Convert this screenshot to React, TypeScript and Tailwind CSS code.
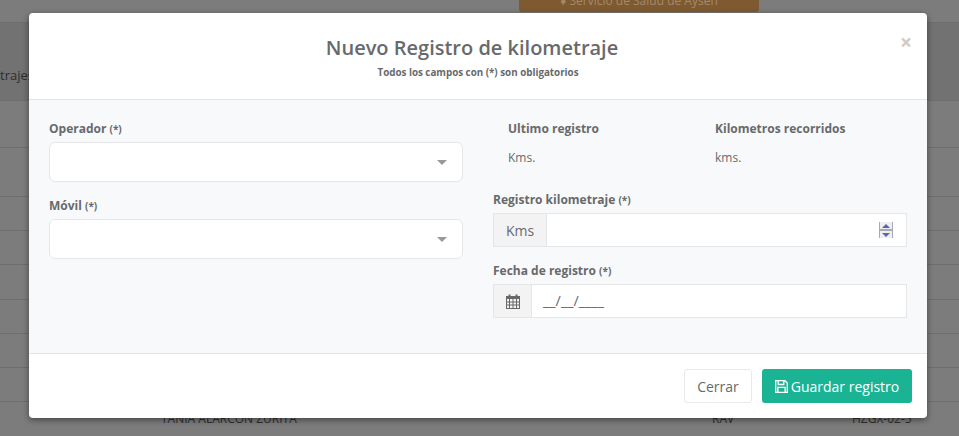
const font = { fontFamily: '"Open Sans", sans-serif' }

const Req = () => <small className="text-[10px] font-bold">(*)</small>

const Select = () => (
  <div className="flex h-[40px] items-center justify-end rounded-[6px] border border-[#e5e6e7] bg-white pr-[15px]">
    <div className="h-0 w-0 border-x-[5px] border-t-[5px] border-x-transparent border-t-[#999]" />
  </div>
)

const Spinner = () => (
  <div className="flex h-[16px] w-[14px] flex-col justify-between border-x border-[#a9a9b4] bg-[#a9a9b4]">
    <div className="flex h-[7px] items-center justify-center bg-[#efeff1]">
      <div className="h-0 w-0 border-x-[4px] border-b-[4px] border-x-transparent border-b-[#5566b5]" />
    </div>
    <div className="flex h-[7px] items-center justify-center bg-[#efeff1]">
      <div className="h-0 w-0 border-x-[4px] border-t-[4px] border-x-transparent border-t-[#5566b5]" />
    </div>
  </div>
)

const CalendarIcon = () => (
  <svg width="14" height="15" viewBox="0 0 14 15" className="text-[#676a6c]">
    <rect x="0.5" y="2.5" width="13" height="12" fill="none" stroke="currentColor" />
    <rect x="0.5" y="2.5" width="13" height="2.5" fill="currentColor" />
    <path d="M0 8h14M0 11h14M3.5 5v9M7 5v9M10.5 5v9" stroke="currentColor" strokeWidth="1" fill="none" />
    <rect x="2.5" y="0.5" width="2" height="3.5" fill="currentColor" />
    <rect x="9.5" y="0.5" width="2" height="3.5" fill="currentColor" />
  </svg>
)

const SaveIcon = () => (
  <svg width="13" height="13" viewBox="0 0 13 13" fill="none" stroke="currentColor" strokeWidth="1.3">
    <path d="M0.7 0.7h9.2l2.4 2.4v9.2H0.7z" />
    <path d="M3.2 0.7v3.8h5.6V0.7" />
    <path d="M2.9 12.3V7.4h7.2v4.9" />
  </svg>
)

const rows = [
  { h: 78, bg: 'bg-[#727272]' },
  { h: 47, bg: '' },
  { h: 49, bg: '' },
  { h: 34, bg: '' },
  { h: 34, bg: '' },
  { h: 35, bg: '' },
  { h: 34, bg: '' },
  { h: 34, bg: '' },
  { h: 34, bg: '' },
]

const Background = () => (
  <div className="h-[436px] overflow-hidden bg-[#7c7c7c] text-[13px] text-[#2e2e2e]">
    <div className="flex h-[23px] border-b border-[#6e6e6e] pl-[519px]">
      <div className="-mt-[10px] flex h-[22px] w-[240px] items-center justify-center rounded-[3px] bg-[#7f5a30] text-[12px] text-[#a08a6c]">
        ♦ Servicio de Salud de Aysén
      </div>
    </div>
    {rows.map((r, i) => (
      <div key={i} className={`border-b border-[#6e6e6e] ${r.bg}`} style={{ height: r.h }}>
        {i === 0 && <p className="pt-[42px] leading-[20px]">trajes</p>}
      </div>
    ))}
    <div className="flex h-[34px] pl-[161px] pt-[8px] text-[12px] leading-[18px]">
      <span className="w-[551px]">TANIA ALARCON ZURITA</span>
      <span className="w-[140px]">RAV</span>
      <span>HZGX-02-5</span>
    </div>
  </div>
)

const App = () => {
  return (
    <div className="relative h-[436px] w-[959px] overflow-hidden text-[#676a6c]" style={font}>
      <Background />
      <div className="absolute left-[29px] top-[13px] flex h-[405px] w-[898px] flex-col rounded-[4px] bg-white shadow-[0_2px_6px_rgba(0,0,0,0.45)]">
        <div className="relative h-[87px] border-b border-[#e5e5e5] pt-[20px] text-center">
          <h4 className="pr-[12px] text-[20px] font-semibold leading-[30px]">Nuevo Registro de kilometraje</h4>
          <p className="mt-[3px] text-[9.8px] font-bold leading-[14px]">Todos los campos con (*) son obligatorios</p>
          <span className="absolute right-[15px] top-[16px] text-[21px] font-bold leading-[26px] text-[#cccccc]">×</span>
        </div>
        <div className="flex h-[253px] gap-[30px] bg-[#f8f9fb] px-[20px]">
          <div className="w-[414px] pt-[20px]">
            <label className="block text-[12px] font-bold leading-[18px]">Operador <Req /></label>
            <div className="mt-[4px]"><Select /></div>
            <label className="mt-[15px] block text-[12px] font-bold leading-[18px]">Móvil <Req /></label>
            <div className="mt-[4px]"><Select /></div>
          </div>
          <div className="w-[414px] pt-[20px]">
            <div className="grid grid-cols-[207px_1fr] pl-[15px]">
              <div>
                <p className="text-[12px] font-bold leading-[18px]">Ultimo registro</p>
                <p className="mt-[11px] text-[12px] leading-[18px]">Kms.</p>
              </div>
              <div>
                <p className="text-[12px] font-bold leading-[18px]">Kilometros recorridos</p>
                <p className="mt-[11px] text-[12px] leading-[18px]">kms.</p>
              </div>
            </div>
            <label className="mt-[24px] block text-[12px] font-bold leading-[18px]">Registro kilometraje <Req /></label>
            <div className="mt-[4px] flex h-[34px] border border-[#e5e6e7] bg-white">
              <div className="flex w-[53px] items-center justify-center border-r border-[#e5e6e7] bg-[#f3f3f4] text-[14px]">Kms</div>
              <div className="flex flex-1 items-center justify-end pr-[13px]"><Spinner /></div>
            </div>
            <label className="mt-[15px] block text-[12px] font-bold leading-[18px]">Fecha de registro <Req /></label>
            <div className="mt-[4px] flex h-[34px] border border-[#e5e6e7] bg-white">
              <div className="flex w-[38px] items-center justify-center border-r border-[#e5e6e7] bg-[#f3f3f4]">
                <CalendarIcon />
              </div>
              <div className="flex flex-1 items-center pl-[11px] text-[14.4px]">__/__/____</div>
            </div>
          </div>
        </div>
        <div className="flex flex-1 items-start justify-end gap-[10px] border-t border-[#e5e5e5] pr-[15px] pt-[15px]">
          <button className="h-[34px] w-[68px] rounded-[3px] border border-[#e7eaec] bg-white text-[14px]">Cerrar</button>
          <button className="flex h-[34px] w-[150px] items-center justify-center gap-[3px] rounded-[3px] bg-[#1ab394] text-[14px] text-white">
            <SaveIcon /> Guardar registro
          </button>
        </div>
      </div>
    </div>
  )
}

export default App
